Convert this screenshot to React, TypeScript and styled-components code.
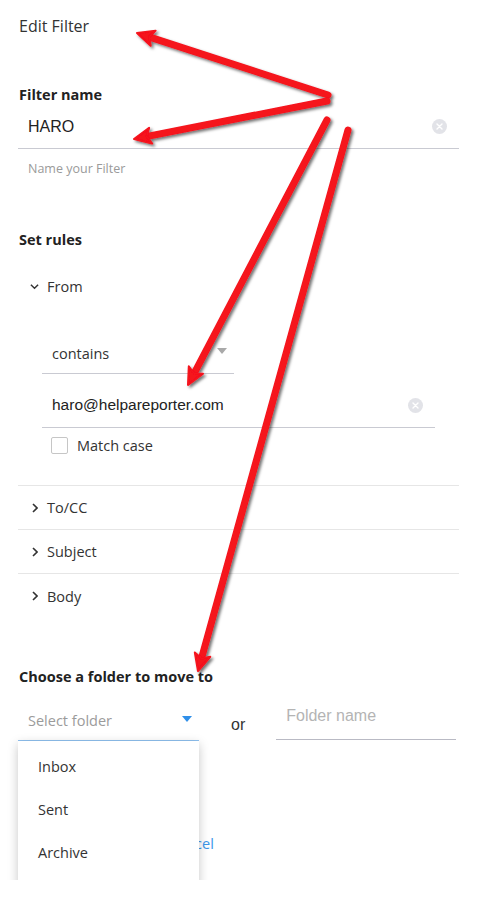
import React from 'react';
import styled, { createGlobalStyle } from 'styled-components';

const GlobalStyle = createGlobalStyle`
    html, body {
        margin: 0;
        padding: 0;
        background: #ffffff;
    }
    * {
        box-sizing: border-box;
    }
`;

const ui = `"Open Sans", "Noto Sans", sans-serif`;
const field = `"Liberation Sans", Arial, sans-serif`;

const Page = styled.div`
    position: relative;
    width: 488px;
    height: 880px;
    overflow: hidden;
    padding: 14px 29px 0 18px;
    font-family: ${ui};
    color: #333333;
    background: #ffffff;
`;

const Title = styled.h1`
    margin: 0 0 0 1px;
    font-size: 16px;
    font-weight: 400;
    line-height: 24px;
    color: #333333;
`;

const Label = styled.h2<{ $top: number }>`
    margin: ${(p) => p.$top}px 0 0 1px;
    font-size: 14.5px;
    font-weight: 700;
    line-height: 20px;
    color: #222222;
`;

const TextField = styled.div<{ $height: number; $width?: number; $size?: number }>`
    display: flex;
    align-items: center;
    height: ${(p) => p.$height}px;
    width: ${(p) => (p.$width ? `${p.$width}px` : '100%')};
    padding: 0 12px 0 10px;
    border-bottom: 1px solid #c9cad2;
    font-family: ${field};
    font-size: ${(p) => p.$size ?? 16}px;
    color: #222222;
`;

const FieldText = styled.span`
    flex: 1;
`;

const Clear = styled.span`
    width: 15px;
    height: 15px;
    border-radius: 50%;
    background: #e2e3e8;
    display: flex;
    align-items: center;
    justify-content: center;
`;

const Hint = styled.div`
    margin: 12px 0 0 10px;
    font-size: 12.5px;
    line-height: 16px;
    color: #9a9a9a;
`;

const RuleHead = styled.div<{ $top?: number; $height: number; $divider?: boolean }>`
    display: flex;
    align-items: center;
    gap: 8px;
    height: ${(p) => p.$height}px;
    margin-top: ${(p) => p.$top ?? 0}px;
    padding-left: 12px;
    font-size: 14.5px;
    color: #333333;
    border-bottom: ${(p) => (p.$divider ? '1px solid #e6e6e6' : 'none')};
`;

const Chevron = styled.span`
    display: flex;
    width: 9px;
    justify-content: center;
`;

const RuleBody = styled.div`
    padding-left: 24px;
    padding-bottom: 30px;
    border-bottom: 1px solid #e6e6e6;
`;

const Select = styled.div<{ $top: number; $width: number; $active?: boolean }>`
    position: relative;
    display: flex;
    align-items: center;
    justify-content: space-between;
    width: ${(p) => p.$width}px;
    height: ${(p) => (p.$active ? 44 : 41)}px;
    margin-top: ${(p) => p.$top}px;
    padding: ${(p) => (p.$active ? '4px 7px 0 10px' : '0 7px 0 10px')};
    border-bottom: 1px solid ${(p) => (p.$active ? '#8fc1f0' : '#c9cad2')};
    font-size: 14.5px;
    color: ${(p) => (p.$active ? '#9b9b9b' : '#333333')};
`;

const Caret = styled.span<{ $color: string }>`
    width: 0;
    height: 0;
    margin-top: -4px;
    border-left: 5px solid transparent;
    border-right: 5px solid transparent;
    border-top: 6px solid ${(p) => p.$color};
`;

const CheckRow = styled.label`
    display: flex;
    align-items: center;
    gap: 9px;
    height: 20px;
    margin-top: 7px;
    padding-left: 9px;
    font-size: 14.5px;
    color: #333333;
`;

const Box = styled.span`
    width: 17px;
    height: 17px;
    border: 1px solid #c6c6c6;
    border-radius: 2px;
    background: #ffffff;
`;

const FolderRow = styled.div`
    display: flex;
    align-items: flex-start;
    margin-top: 10px;
`;

const SelectWrap = styled.div`
    position: relative;
`;

const Or = styled.span`
    margin: 18px 0 0 32px;
    font-family: ${field};
    font-size: 16px;
    line-height: 20px;
    color: #333333;
`;

const FolderInput = styled.div`
    width: 180px;
    height: 43px;
    margin-left: 31px;
    padding: 10px 0 0 10px;
    border-bottom: 1px solid #b9bac4;
    font-family: ${field};
    font-size: 16px;
    color: #b4b4b4;
`;

const Menu = styled.ul`
    position: absolute;
    top: 100%;
    left: 0;
    width: 181px;
    height: 190px;
    margin: 0;
    padding: 4px 0 0;
    list-style: none;
    background: #ffffff;
    box-shadow: 0 3px 10px rgba(0, 0, 0, 0.22);
    z-index: 2;
`;

const MenuItem = styled.li`
    height: 43px;
    line-height: 43px;
    padding-left: 20px;
    font-size: 14.5px;
    color: #333333;
`;

const Actions = styled.div`
    display: flex;
    align-items: center;
    gap: 53px;
    margin-top: 86px;
    padding-left: 2px;
`;

const SaveButton = styled.button`
    width: 96px;
    height: 32px;
    border: none;
    border-radius: 2px;
    background: #2e8fe8;
    color: #ffffff;
    font-family: ${ui};
    font-size: 14px;
`;

const CancelLink = styled.a`
    font-size: 14.5px;
    color: #3c97ea;
    text-decoration: none;
`;

const Overlay = styled.svg`
    position: absolute;
    top: 0;
    left: 0;
    pointer-events: none;
    z-index: 5;
`;

type ArrowProps = { x1: number; y1: number; x2: number; y2: number };

const Arrow = ({ x1, y1, x2, y2 }: ArrowProps) => {
    const dx = x2 - x1;
    const dy = y2 - y1;
    const len = Math.hypot(dx, dy);
    const ux = dx / len;
    const uy = dy / len;
    const head = 17;
    const half = 8;
    const bx = x2 - ux * head;
    const by = y2 - uy * head;
    const points = `${x2},${y2} ${bx - uy * half},${by + ux * half} ${bx + ux * 4},${by + uy * 4} ${bx + uy * half},${by - ux * half}`;
    return (
        <g>
            <line x1={x1} y1={y1} x2={bx + ux * 6} y2={by + uy * 6} stroke="#f5121c" strokeWidth={7} strokeLinecap="round" />
            <polygon points={points} fill="#f5121c" stroke="#f5121c" strokeWidth={2} strokeLinejoin="round" />
        </g>
    );
};

const ClearIcon = () => (
    <Clear>
        <svg width="7" height="7" viewBox="0 0 7 7">
            <path d="M1 1L6 6M6 1L1 6" stroke="#ffffff" strokeWidth="1.4" strokeLinecap="round" />
        </svg>
    </Clear>
);

const ChevronDown = () => (
    <Chevron>
        <svg width="10" height="7" viewBox="0 0 10 7">
            <path d="M1 1.5L5 5.5L9 1.5" stroke="#333" strokeWidth="1.6" fill="none" />
        </svg>
    </Chevron>
);

const ChevronRight = () => (
    <Chevron>
        <svg width="6" height="10" viewBox="0 0 6 10">
            <path d="M1 1L5 5L1 9" stroke="#333" strokeWidth="1.6" fill="none" />
        </svg>
    </Chevron>
);

const collapsed = ['To/CC', 'Subject', 'Body'];
const folders = ['Inbox', 'Sent', 'Archive'];

const App = () => {
    return (
        <Page>
            <GlobalStyle />
            <Title>Edit Filter</Title>

            <Label $top={47}>Filter name</Label>
            <TextField $height={44}>
                <FieldText>HARO</FieldText>
                <ClearIcon />
            </TextField>
            <Hint>Name your Filter</Hint>

            <Label $top={53}>Set rules</Label>
            <RuleHead $top={18} $height={36}>
                <ChevronDown />
                From
            </RuleHead>
            <RuleBody>
                <Select $top={29} $width={192}>
                    contains
                    <Caret $color="#a9a9a9" />
                </Select>
                <TextField $height={45} $width={393} $size={15.5} style={{ marginTop: 9 }}>
                    <FieldText>haro@helpareporter.com</FieldText>
                    <ClearIcon />
                </TextField>
                <CheckRow>
                    <Box />
                    Match case
                </CheckRow>
            </RuleBody>
            {collapsed.map((name, i) => (
                <RuleHead key={name} $height={44} $divider={i < collapsed.length - 1}>
                    <ChevronRight />
                    {name}
                </RuleHead>
            ))}

            <Label $top={49}>Choose a folder to move to</Label>
            <FolderRow>
                <SelectWrap>
                    <Select $top={0} $width={181} $active>
                        Select folder
                        <Caret $color="#2f8fe9" />
                    </Select>
                    <Menu>
                        {folders.map((f) => (
                            <MenuItem key={f}>{f}</MenuItem>
                        ))}
                    </Menu>
                </SelectWrap>
                <Or>or</Or>
                <FolderInput>Folder name</FolderInput>
            </FolderRow>
            <Actions>
                <SaveButton>Save</SaveButton>
                <CancelLink href="#">Cancel</CancelLink>
            </Actions>

            <Overlay width="488" height="880" viewBox="0 0 488 880">
                <defs>
                    <filter id="shade" x="-20%" y="-20%" width="140%" height="140%">
                        <feDropShadow dx="2" dy="2" stdDeviation="1.6" floodColor="#000" floodOpacity="0.55" />
                    </filter>
                </defs>
                <g filter="url(#shade)">
                    <Arrow x1={328} y1={95} x2={137} y2={33} />
                    <Arrow x1={327} y1={101} x2={134} y2={139} />
                    <Arrow x1={327} y1={120} x2={188} y2={385} />
                    <Arrow x1={348} y1={130} x2={198} y2={671} />
                </g>
            </Overlay>
        </Page>
    );
};

export default App;
